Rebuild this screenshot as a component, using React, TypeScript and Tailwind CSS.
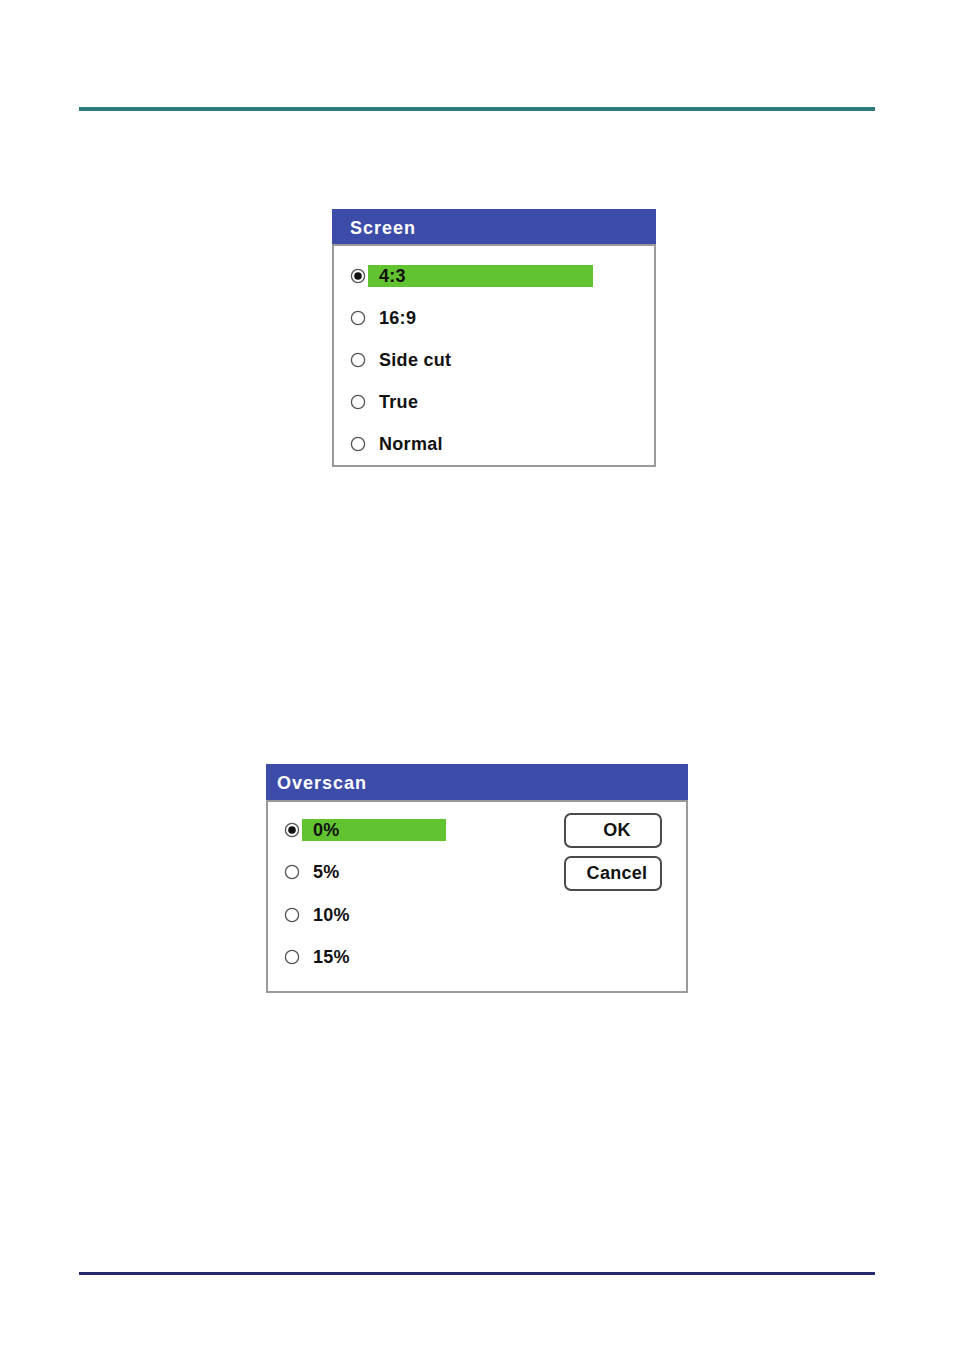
import React from "react";

const font = { fontFamily: '"Liberation Sans", Arial, sans-serif' };

function Radio({ checked }: { checked: boolean }) {
  return (
    <svg width="16" height="16" viewBox="0 0 16 16" className="shrink-0 -mt-[1px]">
      <circle cx="8" cy="8" r="6.6" fill="white" stroke="#555" strokeWidth="1.3" />
      {checked && <circle cx="8" cy="8" r="3.8" fill="#111" />}
    </svg>
  );
}

function Row({ label, checked, barW }: { label: string; checked?: boolean; barW: number }) {
  return (
    <div className="flex items-center h-[42px]">
      <Radio checked={!!checked} />
      <div
        className={`ml-[2px] h-[22px] flex items-center pl-[11px] text-[18px] font-bold text-[#111] tracking-[0.3px] ${checked ? "bg-[#62c331]" : ""}`}
        style={{ width: barW }}
      >
        {label}
      </div>
    </div>
  );
}

export default function App() {
  return (
    <div className="w-[954px] h-[1350px] bg-white relative" style={font}>
      <div className="pt-[107px] px-[79px]">
        <div className="h-[4px] bg-[#2e7b78]" />
      </div>

      {/* Screen dialog */}
      <div className="mt-[98px] ml-[332px] w-[324px]">
        <div className="h-[35px] bg-[#3c4ca8] text-white text-[18px] font-bold pl-[18px] pt-[3px] flex items-center tracking-[1px]">
          Screen
        </div>
        <div className="h-[223px] border-2 border-[#9a9a9a] pl-[16px] pt-[9px]">
          <Row label="4:3" checked barW={225} />
          <Row label="16:9" barW={225} />
          <Row label="Side cut" barW={225} />
          <Row label="True" barW={225} />
          <Row label="Normal" barW={225} />
        </div>
      </div>

      {/* Overscan dialog */}
      <div className="mt-[297px] ml-[266px] w-[422px]">
        <div className="h-[36px] bg-[#3c4ca8] text-white text-[18px] font-bold pl-[11px] pt-[2px] flex items-center tracking-[1px]">
          Overscan
        </div>
        <div className="h-[193px] border-2 border-[#9a9a9a] flex">
          <div className="pl-[16px] pt-[7px] flex-1">
            <Row label="0%" checked barW={144} />
            <Row label="5%" barW={144} />
            <div className="h-[1px]" />
            <Row label="10%" barW={144} />
            <Row label="15%" barW={144} />
          </div>
          <div className="pr-[24px] pt-[11px] flex flex-col gap-[8px]">
            <div className="w-[98px] h-[35px] border-2 border-[#4a4a4a] rounded-[7px] flex items-center justify-center pl-[8px] text-[18px] font-bold text-[#111] tracking-[0.3px]">
              OK
            </div>
            <div className="w-[98px] h-[35px] border-2 border-[#4a4a4a] rounded-[7px] flex items-center justify-center pl-[8px] text-[18px] font-bold text-[#111] tracking-[0.3px]">
              Cancel
            </div>
          </div>
        </div>
      </div>

      <div className="absolute left-[79px] right-[79px] top-[1272px] h-[3px] bg-[#23296b]" />
    </div>
  );
}
